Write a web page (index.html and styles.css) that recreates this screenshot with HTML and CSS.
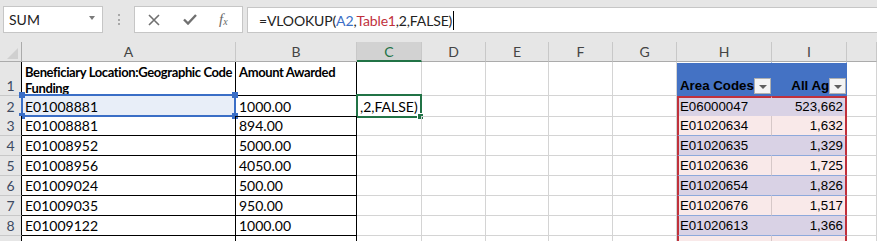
FILE: index.html
```html
<!DOCTYPE html>
<html lang="en">
<head>
  <meta charset="UTF-8" />
  <title>Book1 - Excel</title>
  <link rel="stylesheet" href="styles.css">
</head>
<body>
  <div class="formula-bar">
    <div class="name-box">
      <span>SUM</span>
      <span class="drop-arrow"></span>
    </div>
    <div class="grip"><i></i><i></i><i></i></div>
    <div class="fx-box">
      <svg class="icon" width="12" height="12" viewBox="0 0 12 12">
        <path d="M1 1 L11 11 M11 1 L1 11" stroke="#707070" stroke-width="1.6" fill="none"/>
      </svg>
      <svg class="icon" width="14" height="11" viewBox="0 0 14 11">
        <path d="M1 5.5 L5 9.5 L13 1" stroke="#707070" stroke-width="2.4" fill="none"/>
      </svg>
      <span class="fx">f<sub>x</sub></span>
    </div>
    <div class="formula-input">=VLOOKUP(<span class="ref-a">A2</span>,<span class="ref-t">Table1</span>,2,FALSE)<span class="cursor"></span></div>
  </div>

  <div class="sheet">
    <div class="row head">
      <div class="corner"><span></span></div>
      <div class="ch">A</div>
      <div class="ch">B</div>
      <div class="ch active">C</div>
      <div class="ch">D</div>
      <div class="ch">E</div>
      <div class="ch">F</div>
      <div class="ch">G</div>
      <div class="ch">H</div>
      <div class="ch">I</div>
      <div class="ch"></div>
    </div>

    <div class="row tall">
      <div class="rh">1</div>
      <div class="cell boxed bold">Beneficiary Location:Geographic Code<br>Funding</div>
      <div class="cell boxed bold">Amount Awarded</div>
      <div class="cell"></div>
      <div class="cell"></div>
      <div class="cell"></div>
      <div class="cell"></div>
      <div class="cell"></div>
      <div class="cell tbl-head left">Area Codes<span class="filter"></span></div>
      <div class="cell tbl-head right">All Ages<span class="filter"></span></div>
      <div class="cell"></div>
    </div>

    <div class="row">
      <div class="rh">2</div>
      <div class="cell boxed ref-cell">E01008881
        <div class="ref-box"><i class="hd tl"></i><i class="hd tr"></i><i class="hd bl"></i><i class="hd br"></i></div>
      </div>
      <div class="cell boxed">1000.00</div>
      <div class="cell active-cell">,2,FALSE)<div class="active-box"><i class="fill"></i></div></div>
      <div class="cell"></div>
      <div class="cell"></div>
      <div class="cell"></div>
      <div class="cell"></div>
      <div class="cell tbl band1 first left">E06000047</div>
      <div class="cell tbl band1 first right num">523,662</div>
      <div class="cell"></div>
    </div>

    <div class="row">
      <div class="rh">3</div>
      <div class="cell boxed">E01008881</div>
      <div class="cell boxed">894.00</div>
      <div class="cell"></div>
      <div class="cell"></div>
      <div class="cell"></div>
      <div class="cell"></div>
      <div class="cell"></div>
      <div class="cell tbl band2 left">E01020634</div>
      <div class="cell tbl band2 right num">1,632</div>
      <div class="cell"></div>
    </div>

    <div class="row">
      <div class="rh">4</div>
      <div class="cell boxed">E01008952</div>
      <div class="cell boxed">5000.00</div>
      <div class="cell"></div>
      <div class="cell"></div>
      <div class="cell"></div>
      <div class="cell"></div>
      <div class="cell"></div>
      <div class="cell tbl band1 left">E01020635</div>
      <div class="cell tbl band1 right num">1,329</div>
      <div class="cell"></div>
    </div>

    <div class="row">
      <div class="rh">5</div>
      <div class="cell boxed">E01008956</div>
      <div class="cell boxed">4050.00</div>
      <div class="cell"></div>
      <div class="cell"></div>
      <div class="cell"></div>
      <div class="cell"></div>
      <div class="cell"></div>
      <div class="cell tbl band2 left">E01020636</div>
      <div class="cell tbl band2 right num">1,725</div>
      <div class="cell"></div>
    </div>

    <div class="row">
      <div class="rh">6</div>
      <div class="cell boxed">E01009024</div>
      <div class="cell boxed">500.00</div>
      <div class="cell"></div>
      <div class="cell"></div>
      <div class="cell"></div>
      <div class="cell"></div>
      <div class="cell"></div>
      <div class="cell tbl band1 left">E01020654</div>
      <div class="cell tbl band1 right num">1,826</div>
      <div class="cell"></div>
    </div>

    <div class="row">
      <div class="rh">7</div>
      <div class="cell boxed">E01009035</div>
      <div class="cell boxed">950.00</div>
      <div class="cell"></div>
      <div class="cell"></div>
      <div class="cell"></div>
      <div class="cell"></div>
      <div class="cell"></div>
      <div class="cell tbl band2 left">E01020676</div>
      <div class="cell tbl band2 right num">1,517</div>
      <div class="cell"></div>
    </div>

    <div class="row">
      <div class="rh">8</div>
      <div class="cell boxed">E01009122</div>
      <div class="cell boxed">1000.00</div>
      <div class="cell"></div>
      <div class="cell"></div>
      <div class="cell"></div>
      <div class="cell"></div>
      <div class="cell"></div>
      <div class="cell tbl band1 left">E01020613</div>
      <div class="cell tbl band1 right num">1,366</div>
      <div class="cell"></div>
    </div>

    <div class="row">
      <div class="rh"></div>
      <div class="cell boxed"></div>
      <div class="cell boxed"></div>
      <div class="cell"></div>
      <div class="cell"></div>
      <div class="cell"></div>
      <div class="cell"></div>
      <div class="cell"></div>
      <div class="cell tbl band2 left"></div>
      <div class="cell tbl band2 right num"></div>
      <div class="cell"></div>
    </div>
  </div>
</body>
</html>
```

FILE: styles.css
```css
body {
  margin: 0;
  width: 877px;
  height: 241px;
  overflow: hidden;
  background: #ffffff;
  font-family: Lato, "Open Sans", sans-serif;
  color: #000;
}

/* formula bar */
.formula-bar {
  display: flex;
  align-items: flex-start;
  height: 42px;
  padding: 6px 0 0 3px;
  box-sizing: border-box;
  background: #e6e6e6;
}
.name-box {
  width: 100px;
  height: 27px;
  box-sizing: border-box;
  background: #fff;
  border: 1px solid #c6c6c6;
  display: flex;
  align-items: center;
  justify-content: space-between;
  padding: 0 7px 0 5px;
  font-size: 14px;
  color: #222;
}
.drop-arrow {
  width: 0;
  height: 0;
  border-left: 3.5px solid transparent;
  border-right: 3.5px solid transparent;
  border-top: 4px solid #7a7a7a;
  margin-top: -3px;
}
.grip {
  width: 31px;
  height: 27px;
  display: flex;
  flex-direction: column;
  align-items: center;
  justify-content: center;
  gap: 2.5px;
}
.grip i {
  width: 2px;
  height: 2px;
  background: #a8a8a8;
}
.fx-box {
  width: 109px;
  height: 27px;
  box-sizing: border-box;
  background: #fff;
  border: 1px solid #c6c6c6;
  display: flex;
  align-items: center;
  padding-left: 13px;
  gap: 23px;
}
.fx {
  font-family: "Liberation Serif", serif;
  font-style: italic;
  font-size: 15px;
  color: #6a6a6a;
  margin-left: -1px;
}
.fx sub {
  font-size: 10px;
  vertical-align: -1px;
}
.formula-input {
  flex: 1;
  height: 26px;
  margin: 1px 0 0 4px;
  box-sizing: border-box;
  background: #fff;
  border-top: 1px solid #c6c6c6;
  border-bottom: 1px solid #c6c6c6;
  border-left: 1px solid #c6c6c6;
  display: flex;
  align-items: center;
  padding-left: 11px;
  font-size: 14px;
  letter-spacing: -0.15px;
  color: #222;
  white-space: pre;
}
.ref-a { color: #3a6ec6; }
.ref-t { color: #c0313c; }
.cursor {
  display: inline-block;
  width: 1px;
  height: 19px;
  background: #000;
  margin-left: 1px;
}

/* sheet grid */
.row {
  display: grid;
  grid-template-columns: 22px 214px 121px 65px 64px 63px 64px 64px 95px 75px 30px;
  height: 20px;
}
.row.head {
  height: 20px;
  background: #e6e6e6;
}
.row.tall {
  height: 34px;
}
.row > div {
  box-sizing: border-box;
  border-right: 1px solid #d4d4d4;
  border-bottom: 1px solid #d4d4d4;
  position: relative;
}
.ch {
  display: flex;
  align-items: center;
  justify-content: center;
  font-size: 14px;
  color: #444;
  border-right-color: #c8c8c8 !important;
  border-bottom-color: #ababab !important;
}
.ch.active {
  background: #d2d2d2;
  color: #217346;
  border-bottom: 2px solid #217346 !important;
}
.corner {
  border-bottom-color: #ababab !important;
  border-right-color: #ababab !important;
}
.corner span {
  position: absolute;
  left: 7px;
  top: 6px;
  width: 11px;
  height: 11px;
  background: #d0d0d0;
  clip-path: polygon(100% 0, 100% 100%, 0 100%);
}
.rh {
  background: #e6e6e6;
  display: flex;
  align-items: flex-end;
  justify-content: center;
  padding-bottom: 1px;
  font-size: 14px;
  color: #3d4a62;
  border-right: 1px solid #000 !important;
  border-bottom-color: #c8c8c8 !important;
}
.cell {
  display: flex;
  align-items: flex-end;
  padding: 0 3px 1px 3px;
  font-size: 14px;
  line-height: 17px;
  white-space: nowrap;
}
.cell.boxed {
  border-right-color: #000;
  border-bottom-color: #000;
}
.cell.bold {
  display: block;
  font-weight: bold;
  font-size: 13px;
  line-height: 16px;
  letter-spacing: -0.38px;
  padding-top: 2px;
  padding-bottom: 0;
  overflow: hidden;
}

/* A2 reference highlight */
.ref-cell {
  background: #e8eef8;
}
.ref-box {
  position: absolute;
  left: -1px;
  top: -2px;
  right: -1px;
  bottom: -1px;
  border: 2px solid #3a6ec6;
}
.hd {
  position: absolute;
  width: 6px;
  height: 6px;
  background: #3a6ec6;
}
.hd.tl { left: -4px; top: -4px; }
.hd.tr { right: -4px; top: -4px; }
.hd.bl { left: -4px; bottom: -4px; }
.hd.br { right: -4px; bottom: -4px; }

/* active cell C2 */
.active-box {
  position: absolute;
  left: -1px;
  top: -2px;
  right: -1px;
  bottom: -2px;
  border: 2px solid #217346;
}
.fill {
  position: absolute;
  right: -4px;
  bottom: -4px;
  width: 5px;
  height: 5px;
  background: #217346;
  border: 1px solid #fff;
}

/* table H:I */
.tbl-head,
.tbl {
  font-family: "Liberation Sans", Arial, sans-serif;
  font-size: 13.3px;
}
.tbl-head {
  background: #4472c4;
  font-weight: bold;
  border-right-color: #4472c4 !important;
  border-bottom-color: #4472c4 !important;
  border-top: 1px solid #ffffff;
  padding-bottom: 1px;
  overflow: hidden;
}
.tbl-head.right {
  justify-content: flex-end;
  padding-right: 2px;
}
.filter {
  position: absolute;
  right: 0;
  bottom: 1px;
  width: 17px;
  height: 16px;
  box-sizing: border-box;
  background: #f4f4f4;
  border: 1px solid #b0b0b0;
}
.filter::after {
  content: "";
  position: absolute;
  left: 4px;
  top: 6px;
  border-left: 4px solid transparent;
  border-right: 4px solid transparent;
  border-top: 4px solid #5f5f5f;
}
.tbl {
  border-bottom-color: #8ea9db !important;
}
.tbl.left {
  border-left: 2px solid #c0313c;
  padding-left: 1px;
}
.tbl.right {
  justify-content: flex-end;
  border-right: 2px solid #c0313c;
  padding-right: 2px;
}
.tbl.first {
  border-top: 2px solid #c0313c;
}
.band1 {
  background: #d9d2e5;
}
.band1.left {
  border-right-color: #d9d2e5;
}
.band2 {
  background: #f9e9e9;
}
.band2.left {
  border-right-color: #d6c8c8;
}
```
